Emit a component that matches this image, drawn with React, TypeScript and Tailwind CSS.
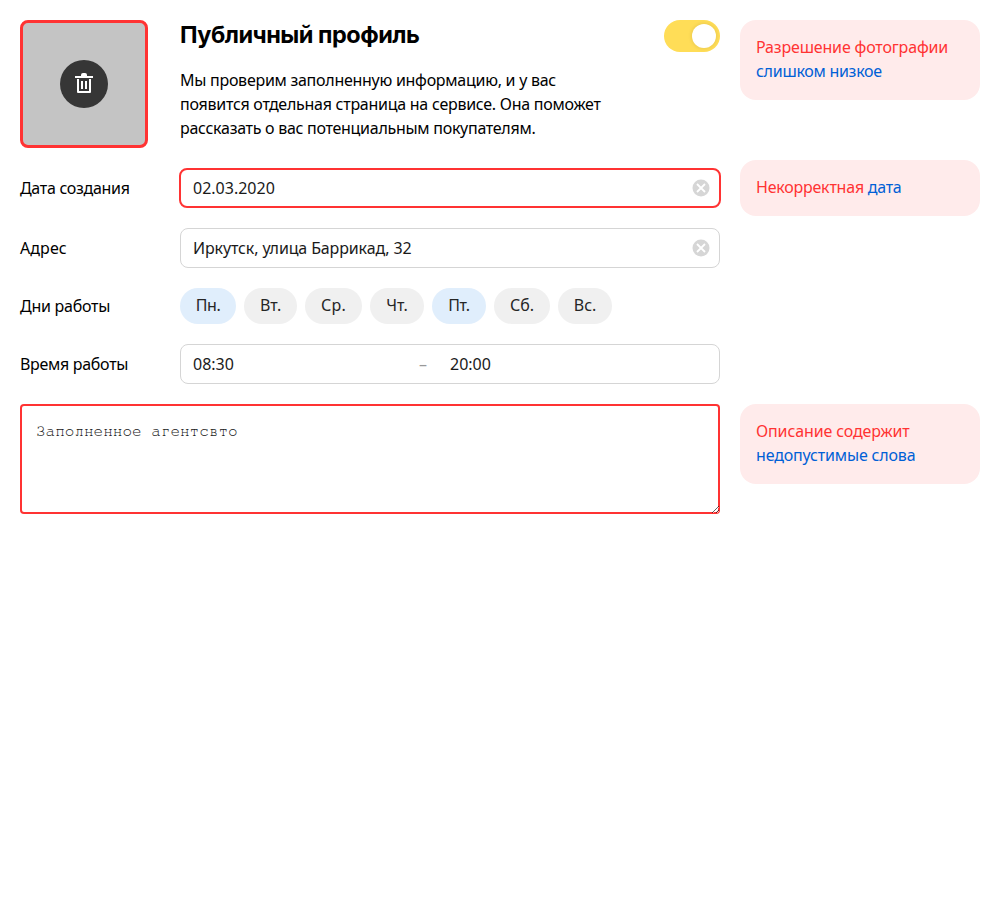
import { useState, type ReactNode } from 'react';

const DAYS = [
  { label: 'Пн.', width: 'w-[56px]', spacing: 'tracking-[-0.5px]' },
  { label: 'Вт.', width: 'w-[53px]', spacing: 'tracking-[-0.1px]' },
  { label: 'Ср.', width: 'w-[57px]', spacing: 'tracking-[0.2px]' },
  { label: 'Чт.', width: 'w-[54px]', spacing: 'tracking-[-0.1px]' },
  { label: 'Пт.', width: 'w-[54px]', spacing: 'tracking-[-0.5px]' },
  { label: 'Сб.', width: 'w-[56px]', spacing: 'tracking-[-0.1px]' },
  { label: 'Вс.', width: 'w-[54px]', spacing: 'tracking-[-0.1px]' },
];

function ErrorNote({ children }: { children: ReactNode }) {
  return (
    <aside className="w-60 shrink-0 self-start rounded-2xl bg-[#ffebeb] px-4 pt-[15px] pb-[17px] text-[#ff3333]">
      <p className="leading-6">{children}</p>
    </aside>
  );
}

function TrashIcon() {
  return (
    <svg width="24" height="24" viewBox="0 0 24 24" fill="none">
      <path d="M3 4h6V3q0-2 2-2h2q2 0 2 2v1h6v2H3z" fill="#fff" />
      <path d="M6 7v13h12V7" stroke="#fff" strokeWidth="2" strokeLinejoin="round" />
      <path d="M10 9v8M14 9v8" stroke="#fff" strokeWidth="2" />
    </svg>
  );
}

function ClearIcon() {
  return (
    <svg width="18" height="18" viewBox="0 0 18 18" fill="none">
      <circle cx="9" cy="9" r="8.500" fill="#d6d6d6" />
      <path d="M5 5l8 8M13 5l-8 8" stroke="#fff" strokeWidth="1.800" />
    </svg>
  );
}

export default function App() {
  const [selected, setSelected] = useState([0, 4]);
  const toggle = (i: number) =>
    setSelected((s) => (s.includes(i) ? s.filter((d) => d !== i) : [...s, i]));

  return (
    <main className="flex w-[1000px] flex-col gap-5 bg-white p-5 font-['Noto_Sans',sans-serif] text-base leading-6 text-black">
      <section className="flex h-32 gap-5">
        <div className="flex w-[700px] items-start">
          <div className="mr-8 flex size-32 shrink-0 items-center justify-center rounded-lg border-3 border-[#ff3333] bg-[#c4c4c4]">
            <button className="flex size-12 items-center justify-center rounded-full bg-[#363636]">
              <TrashIcon />
            </button>
          </div>
          <div className="w-[484px]">
            <h1 className="h-12 font-['Inter',sans-serif] text-[23.5px] leading-[30px] font-bold tracking-[-0.5px]">
              Публичный профиль
            </h1>
            <p className="whitespace-nowrap">
              <span className="block tracking-[-0.27px]">Мы проверим заполненную информацию, и у вас</span>
              <span className="block tracking-[-0.26px]">появится отдельная страница на сервисе. Она поможет</span>
              <span className="block tracking-[-0.28px]">рассказать о вас потенциальным покупателям.</span>
            </p>
          </div>
          <button className="flex h-8 w-14 shrink-0 items-center justify-end rounded-full bg-[#ffdd57] pr-1">
            <span className="size-6 rounded-full bg-white shadow-[0_0_4px_rgba(0,0,0,0.12)]" />
          </button>
        </div>
        <ErrorNote>
          <span className="block tracking-[-0.17px]">Разрешение фотографии</span>
          <a className="block tracking-[-0.28px] text-[#0060d6]">слишком низкое</a>
        </ErrorNote>
      </section>

      <section className="-mt-2 flex h-14 items-start gap-5">
        <div className="flex h-14 w-[700px] items-center">
          <label className="w-40 shrink-0 tracking-[-0.3px]">Дата создания</label>
          <div className="-mx-px flex h-10 w-[542px] items-center justify-between rounded-lg border-2 border-[#ff3333] pr-[9px] pl-3 text-[#1a1a1a]">
            <span>02.03.2020</span>
            <ClearIcon />
          </div>
        </div>
        <ErrorNote>
          <span className="tracking-[-0.22px]">Некорректная </span>
          <a className="tracking-[-0.3px] text-[#0060d6]">дата</a>
        </ErrorNote>
      </section>

      <section className="-mt-2 flex h-10 w-[700px] items-center">
        <label className="w-40 shrink-0 tracking-[0.1px]">Адрес</label>
        <div className="flex h-10 w-[540px] items-center justify-between rounded-lg border border-[#d5d5d5] pr-[9px] pl-3 text-[#1a1a1a]">
          <span className="tracking-[-0.13px]">Иркутск, улица Баррикад, 32</span>
          <ClearIcon />
        </div>
      </section>

      <section className="flex h-9 w-[700px] items-center">
        <label className="w-40 shrink-0 tracking-[-0.25px]">Дни работы</label>
        <div className="flex gap-2">
          {DAYS.map((day, i) => (
            <button
              key={day.label}
              onClick={() => toggle(i)}
              className={`flex h-9 justify-center rounded-full pt-[5px] text-[#262626] ${day.width} ${day.spacing} ${
                selected.includes(i) ? 'bg-[#e0eefc]' : 'bg-[#f0f0f0]'
              }`}
            >
              {day.label}
            </button>
          ))}
        </div>
      </section>

      <section className="flex h-10 w-[700px] items-center">
        <label className="w-40 shrink-0 tracking-[-0.3px]">Время работы</label>
        <div className="flex h-10 w-[540px] items-center rounded-lg border border-[#d5d5d5] pl-3 text-[#1a1a1a]">
          <span className="w-[226px]">08:30</span>
          <span className="w-[31px] text-[#999]">–</span>
          <span>20:00</span>
        </div>
      </section>

      <section className="flex gap-5">
        <textarea
          defaultValue="Заполненное агентсвто"
          spellCheck={false}
          className="block h-[110px] w-[700px] resize rounded bg-white px-4 pt-[15px] pb-4 font-['FreeMono','Liberation_Mono',monospace] text-base leading-6 text-[#1a1a1a] shadow-[inset_0_0_0_2px_#ff3333] outline-none"
        />
        <ErrorNote>
          <span className="block tracking-[-0.13px]">Описание содержит</span>
          <a className="block tracking-[-0.17px] text-[#0060d6]">недопустимые слова</a>
        </ErrorNote>
      </section>
    </main>
  );
}
